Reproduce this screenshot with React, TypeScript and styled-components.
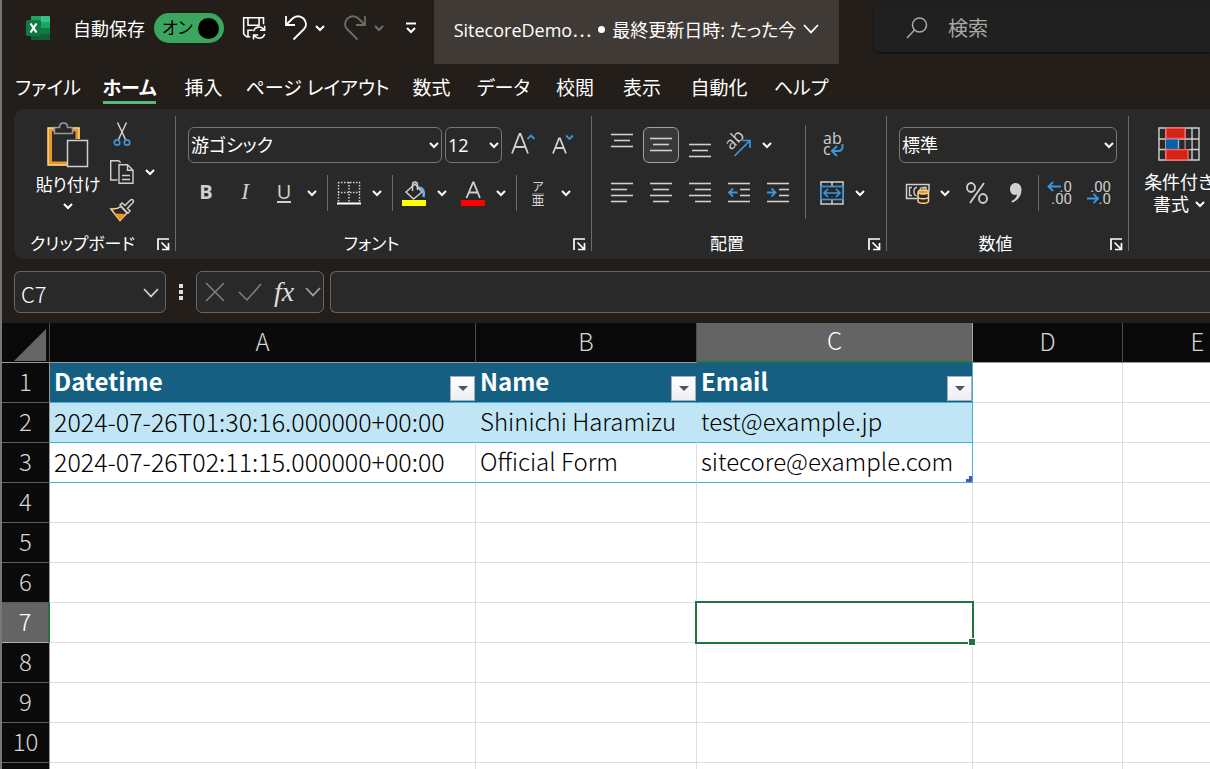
import React, { useState } from "react";
import styled, { createGlobalStyle, css } from "styled-components";

const UI_FONT = '"Open Sans", "Noto Sans CJK JP", sans-serif';
const SHEET_FONT = '"Noto Sans CJK JP", sans-serif';

const ink = "#ffffff";
const icon = "#d0d0d0";
const blue = "#3a96dd";
const panel = "#292929";
const line = "#6b6b6b";
const green = "#217346";
const gold = "#e8962a";
const paleGold = "#fbd68a";

const GlobalStyle = createGlobalStyle`
  * { box-sizing: border-box; }
  body { margin: 0; background: #231e19; }
  button, input, select { font: inherit; color: inherit; }
  svg { flex: none; overflow: visible; }
`;

const Window = styled.div`
  display: flex;
  flex-direction: column;
  height: 100vh;
  overflow: hidden;
  border-left: 2px solid #777777;
  background: #231e19;
  color: ${ink};
  font-family: ${UI_FONT};
  font-size: 18px;
  font-feature-settings: "palt";
`;

/* ---------- title bar ---------- */

const TitleBar = styled.header`
  display: flex;
  align-items: flex-start;
  height: 64px;
  flex: none;
`;

const QuickAccess = styled.div`
  display: flex;
  align-items: center;
  gap: 18px;
  height: 56px;
  width: 432px;
  flex: none;
  padding-left: 24px;
`;

const AutoSave = styled.label`
  display: flex;
  align-items: center;
  gap: 9px;
  margin-left: 5px;
  white-space: nowrap;
`;

const HiddenCheck = styled.input`
  position: absolute;
  opacity: 0;
  width: 1px;
  height: 1px;
`;

const Toggle = styled.span<{ $on: boolean }>`
  display: flex;
  flex-direction: ${(p) => (p.$on ? "row" : "row-reverse")};
  align-items: center;
  justify-content: space-between;
  width: 70px;
  height: 30px;
  padding: 0 5px 0 8px;
  border-radius: 15px;
  background: ${(p) => (p.$on ? "#3aa660" : "#666666")};
  color: #000000;
  font-size: 17px;
  line-height: 30px;
`;

const Knob = styled.span`
  width: 21px;
  height: 21px;
  border-radius: 50%;
  background: #000000;
`;

const IconButton = styled.button<{ $w?: number; $dim?: boolean }>`
  display: flex;
  align-items: center;
  justify-content: center;
  width: ${(p) => p.$w ?? 24}px;
  height: 36px;
  flex: none;
  padding: 0;
  border: 0;
  background: none;
  opacity: ${(p) => (p.$dim ? 0.35 : 1)};
`;

const DocTitle = styled.button`
  display: flex;
  align-items: center;
  justify-content: center;
  gap: 7px;
  width: 405px;
  height: 64px;
  flex: none;
  padding: 0 0 6px;
  border: 0;
  background: #3f3a36;
  white-space: nowrap;
`;

const FileName = styled.span`
  display: block;
`;

const Ellipsis = styled.span`
  font-family: ${SHEET_FONT};
  font-feature-settings: normal;
`;

const Bullet = styled.span`
  width: 7px;
  height: 7px;
  border-radius: 50%;
  background: ${ink};
`;

const Search = styled.label`
  display: flex;
  align-items: center;
  flex: 1;
  min-width: 0;
  height: 48px;
  gap: 20px;
  margin: 4px 0 0 35px;
  padding-left: 32px;
  border-radius: 6px 0 0 6px;
  background: #202020;
  box-shadow: 0 1px 2px #0c0c0c;
  color: #b0b0b0;
`;

const SearchInput = styled.input`
  flex: 1;
  min-width: 0;
  padding: 0;
  border: 0;
  outline: 0;
  background: none;
  font-size: 20px;
  &::placeholder { color: #a8a8a8; opacity: 1; }
`;

/* ---------- tabs ---------- */

const Tabs = styled.nav`
  display: flex;
  gap: 27px;
  height: 45px;
  flex: none;
  padding: 8px 0 0 18px;
`;

const Tab = styled.button<{ $w: number; $active?: boolean }>`
  display: flex;
  justify-content: center;
  width: ${(p) => p.$w}px;
  height: 32px;
  flex: none;
  padding: 0;
  border: 0;
  border-bottom: 3px solid ${(p) => (p.$active ? "#55b97b" : "transparent")};
  background: none;
  font-size: 19px;
  line-height: 32px;
  font-weight: ${(p) => (p.$active ? 700 : 400)};
  white-space: nowrap;
`;

/* ---------- ribbon ---------- */

const Ribbon = styled.section`
  display: flex;
  height: 150px;
  flex: none;
  margin-left: 12px;
  padding: 7px 0 8px;
  border-radius: 10px 0 0 10px;
  background: ${panel};
`;

const Group = styled.div<{ $w: number }>`
  display: flex;
  flex-direction: column;
  justify-content: space-between;
  width: ${(p) => p.$w}px;
  flex: none;
  border-right: 1px solid ${line};
`;

const GroupBody = styled.div<{ $left?: number }>`
  display: flex;
  height: 102px;
  padding: 11px 0 0 ${(p) => p.$left ?? 12}px;
`;

const GroupFooter = styled.div`
  display: grid;
  grid-template-columns: 1fr 24px;
  grid-template-rows: 26px;
  align-items: center;
  margin-bottom: -6px;
  font-size: 17px;
  line-height: 24px;
  text-align: center;
`;

const Rows = styled.div`
  display: flex;
  flex-direction: column;
  gap: 12px;
`;

const Row = styled.div`
  display: flex;
  align-items: center;
  gap: 3px;
  height: 36px;
`;

const Tool = styled.button<{ $active?: boolean }>`
  display: flex;
  align-items: center;
  justify-content: center;
  width: 36px;
  height: 36px;
  flex: none;
  padding: 0;
  border: 1px solid transparent;
  border-radius: 6px;
  background: none;
  color: ${icon};
  font-size: 20px;
  ${(p) =>
    p.$active &&
    css`
      border-color: #a0a0a0;
      background: #383838;
    `}
`;

const Split = styled.div<{ $gap?: number }>`
  display: flex;
  align-items: center;
  gap: ${(p) => p.$gap ?? 0}px;
  flex: none;
`;

const letter = css`
  display: block;
  padding-bottom: 3px;
`;

const Bold = styled.b`
  ${letter}
  font-weight: 700;
`;

const Italic = styled.i`
  ${letter}
  font-family: "Liberation Serif", serif;
  font-size: 23px;
`;

const Underline = styled.span`
  display: block;
  border-bottom: 2px solid ${icon};
  line-height: 18px;
`;

const Divider = styled.span`
  width: 1px;
  height: 36px;
  flex: none;
  margin-left: 2px;
  background: ${line};
`;

const TallDivider = styled.span`
  width: 1px;
  height: 94px;
  flex: none;
  margin: -2px 8px 0 9px;
  background: ${line};
`;

const SelectBox = styled.span<{ $w: number }>`
  position: relative;
  display: block;
  width: ${(p) => p.$w}px;
  height: 36px;
  flex: none;
`;

const Select = styled.select`
  appearance: none;
  width: 100%;
  height: 100%;
  padding: 0 20px 0 2px;
  border: 1px solid #757575;
  border-radius: 6px;
  background: ${panel};
  font-size: 18px;
`;

const SelectArrow = styled.span`
  position: absolute;
  top: 0;
  right: 3px;
  display: flex;
  align-items: center;
  height: 100%;
  pointer-events: none;
`;

const BigTool = styled.button`
  display: flex;
  flex-direction: column;
  align-items: center;
  width: 72px;
  flex: none;
  padding: 0;
  border: 0;
  background: none;
  font-size: 17px;
  line-height: 24px;
  white-space: nowrap;
`;

const PasteTool = styled(BigTool)`
  margin-top: -5px;
  gap: 5px;
`;

const FormatTool = styled(BigTool)`
  gap: 10px;
  font-size: 18px;
  line-height: 22px;
`;

const LabelLine = styled.span`
  display: flex;
  align-items: center;
  justify-content: center;
  gap: 6px;
`;

const SmallStack = styled.div`
  display: flex;
  flex-direction: column;
  gap: 2px;
  margin-top: -11px;
`;

/* ---------- formula bar ---------- */

const FormulaBar = styled.div`
  display: flex;
  align-items: center;
  flex: none;
  height: 64px;
  padding: 2px 0 0 12px;
`;

const fieldBox = css`
  display: flex;
  align-items: center;
  height: 42px;
  border: 1px solid #666666;
  border-radius: 6px;
  background: ${panel};
`;

const NameBox = styled.label`
  ${fieldBox}
  width: 152px;
  flex: none;
  padding: 2px 6px 0 6px;
`;

const NameInput = styled.input`
  flex: 1;
  min-width: 0;
  padding: 0;
  border: 0;
  outline: 0;
  background: none;
  font-family: ${SHEET_FONT};
  font-size: 22px;
  font-weight: 300;
`;

const FormulaTools = styled.div`
  ${fieldBox}
  width: 128px;
  flex: none;
  justify-content: space-between;
  padding: 0 2px 0 5px;
`;

const Fx = styled.i`
  color: #dddddd;
  font-family: "Liberation Serif", serif;
  font-size: 28px;
  line-height: 36px;
`;

const FormulaInput = styled.input`
  ${fieldBox}
  flex: 1;
  min-width: 0;
  margin-left: 6px;
  padding: 0 8px;
  border-right: 0;
  border-radius: 6px 0 0 6px;
  outline: 0;
`;

/* ---------- sheet ---------- */

const SheetArea = styled.main`
  flex: 1;
  min-height: 0;
  overflow: hidden;
  background: #ffffff;
`;

const Sheet = styled.table`
  width: 1271px;
  table-layout: fixed;
  border-collapse: separate;
  border-spacing: 0;
  font-family: ${SHEET_FONT};
  font-feature-settings: normal;
  font-size: 24px;
  font-weight: 300;
  line-height: 34px;
`;

const Col = styled.col<{ $w: number }>`
  width: ${(p) => p.$w}px;
`;

const headerCell = css<{ $current?: boolean }>`
  height: 40px;
  padding: 0 0 4px;
  background: ${(p) => (p.$current ? "#646464" : "#0a0a0a")};
  color: ${(p) => (p.$current ? "#ffffff" : "#d6d6d6")};
  font-weight: 300;
  text-align: center;
`;

const ColumnHead = styled.th<{ $current?: boolean }>`
  ${headerCell}
  border-right: 1px solid ${(p) => (p.$current ? "#a6a6a6" : "#4c4c4c")};
  border-bottom: ${(p) => (p.$current ? `2px solid ${green}` : "1px solid #9a9a9a")};
`;

const RowHead = styled.th<{ $current?: boolean }>`
  ${headerCell}
  border-right: ${(p) => (p.$current ? `2px solid ${green}` : "1px solid #9a9a9a")};
  border-bottom: 1px solid ${(p) => (p.$current ? "#b0b0b0" : "#5c5c5c")};
`;

const Corner = styled.td`
  height: 40px;
  padding: 4px 3px 0 0;
  background: #0a0a0a;
  border-right: 1px solid #4c4c4c;
  border-bottom: 1px solid #9a9a9a;
  line-height: 0;
  text-align: right;
`;

type Kind = "plain" | "title" | "band" | "data";

const Cell = styled.td<{ $kind: Kind; $last?: boolean; $numeric?: boolean }>`
  position: relative;
  height: 40px;
  padding: 0 0 4px 4px;
  border-right: 1px solid #dedede;
  border-bottom: 1px solid #dedede;
  color: #000000;
  font-size: ${(p) => (p.$numeric ? 25 : 24)}px;
  white-space: nowrap;
  ${(p) =>
    p.$kind !== "plain" &&
    css`
      border-bottom-color: #44b3e1;
    `}
  ${(p) =>
    p.$kind === "title" &&
    css`
      padding-bottom: 0;
      background: #156082;
      border-right-color: #156082;
      color: #ffffff;
      font-weight: 700;
    `}
  ${(p) =>
    p.$kind === "band" &&
    css`
      background: #c0e6f5;
      border-right-color: #c0e6f5;
    `}
  ${(p) =>
    p.$last &&
    css`
      border-right-color: #44b3e1;
    `}
`;

const TitleContent = styled.div`
  display: flex;
  justify-content: space-between;
  height: 39px;
  line-height: 35px;
`;

const FilterButton = styled.button`
  display: flex;
  align-items: center;
  align-self: flex-end;
  justify-content: center;
  width: 25px;
  height: 25px;
  margin-bottom: 1px;
  padding: 0;
  border: 1px solid #a9acb4;
  background: linear-gradient(#ffffff, #eceef3);
`;

const Selection = styled.span`
  position: absolute;
  inset: -2px;
  z-index: 1;
  border: 2px solid ${green};
`;

const FillHandle = styled.span`
  position: absolute;
  right: -4px;
  bottom: -4px;
  width: 8px;
  height: 8px;
  border: 1px solid #ffffff;
  background: ${green};
`;

const TableCorner = styled.svg`
  position: absolute;
  right: 0;
  bottom: 0;
`;

/* ---------- icons ---------- */

const SmallChevron = ({ color = ink }: { color?: string }) => (
  <svg width="10" height="8" viewBox="0 0 10 8" fill="none" stroke={color} strokeWidth="2">
    <path d="M1 2l4 4 4-4" />
  </svg>
);

const WideChevron = ({ color = icon }: { color?: string }) => (
  <svg width="16" height="10" viewBox="0 0 16 10" fill="none" stroke={color} strokeWidth="1.7">
    <path d="M1 1l7 7.4L15 1" />
  </svg>
);

const ExcelLogo = () => (
  <svg width="24" height="24" viewBox="0 0 24 24">
    <path d="M5 0h10v6H5z" fill="#21a366" />
    <path d="M15 0h8a1 1 0 0 1 1 1v5h-9z" fill="#33c481" />
    <path d="M5 6h10v6H5z" fill="#107c41" />
    <path d="M15 6h9v6h-9z" fill="#21a366" />
    <path d="M5 12h10v6H5z" fill="#185c37" />
    <path d="M15 12h9v6h-9z" fill="#107c41" />
    <path d="M5 18h19v5a1 1 0 0 1-1 1H6a1 1 0 0 1-1-1z" fill="#185c37" />
    <rect x="0" y="4" width="15" height="16" rx="1.5" fill="#10793f" />
    <path d="M4.500 7.500l6 9M10.500 7.500l-6 9" stroke="#fff" strokeWidth="2.200" />
  </svg>
);

const SaveIcon = () => (
  <svg width="24" height="24" viewBox="0 0 26 26" fill="none" stroke={ink} strokeWidth="1.700">
    <path d="M9 22.500H5L1.800 19.500V1.800h21.500V9" />
    <path d="M6.500 2v8h12V2" />
    <path d="M6.500 23v-7.500h5" />
    <path d="M12.500 16.500a6 6 0 0 1 11-1.500M24.500 10.500v5h-5" />
    <path d="M24.500 19.500a6 6 0 0 1-11 1.500M12.500 25.500v-5h5" />
  </svg>
);

const UndoIcon = () => (
  <svg width="24" height="26" viewBox="0 0 24 26" fill="none" stroke={ink} strokeWidth="1.800">
    <path d="M2 1v9h9" />
    <path d="M2.500 9.500l6-6c3-3 8-3 11 0s3.500 7.500.5 10.500L9.500 24.500" />
  </svg>
);

const RedoIcon = () => (
  <svg width="24" height="26" viewBox="0 0 24 26" fill="none" stroke={ink} strokeWidth="1.800">
    <path d="M22 1v9h-9" />
    <path d="M21.500 9.500l-6-6c-3-3-8-3-11 0S1 11 4 14l10.500 10.500" />
  </svg>
);

const CustomiseIcon = () => (
  <svg width="12" height="12" viewBox="0 0 12 12" fill="none" stroke={ink} strokeWidth="2">
    <path d="M1 1.500h10M2 6l4 4 4-4" />
  </svg>
);

const SearchIcon = () => (
  <svg width="22" height="22" viewBox="0 0 22 22" fill="none" stroke="#a8a8a8" strokeWidth="1.500">
    <circle cx="13.500" cy="8" r="7" />
    <path d="M8.500 13L1 21" />
  </svg>
);

const PasteIcon = () => (
  <svg width="42" height="46" viewBox="0 0 42 46" fill="none">
    <path d="M7 7.500H3v34h17M26 7.500h4.500V17" stroke={gold} strokeWidth="4" />
    <path d="M7 6H1v37h19M26 6h6v11" stroke={paleGold} strokeWidth="1.500" />
    <path d="M7.500 11.500v-6h5c0-6 8-6 8 0h5v6z" fill={panel} stroke="#9a9a9a" strokeWidth="1.500" />
    <rect x="20.500" y="18.500" width="20" height="26" fill={panel} stroke={icon} strokeWidth="1.500" />
  </svg>
);

const CutIcon = () => (
  <svg width="18" height="26" viewBox="0 0 18 26" fill="none">
    <path d="M4.500 1.500l8 17M13.500 1.500l-8 17" stroke={icon} strokeWidth="1.500" />
    <circle cx="4" cy="21.500" r="2.700" stroke={blue} strokeWidth="1.700" />
    <circle cx="14" cy="21.500" r="2.700" stroke={blue} strokeWidth="1.700" />
  </svg>
);

const CopyIcon = () => (
  <svg width="26" height="26" viewBox="0 0 26 26" fill="none" stroke={icon} strokeWidth="1.400">
    <path d="M8.500 21H1.700V1.700h8l2 2" />
    <path d="M10 5.700h8.500l5.500 5.500v13H10zM18.500 5.700v5.500H24" />
    <path d="M13 16.500h8M13 20.500h8" />
  </svg>
);

const BrushIcon = () => (
  <svg width="26" height="24" viewBox="0 0 26 24" fill="none">
    <path d="M2 11l9 11.500L18 15l-6-6.500c-2.500 2-6 2.800-10 2.500z" fill={panel} stroke={paleGold} strokeWidth="1.500" />
    <path d="M5.500 15.500L17 16l-6 6.500z" fill={gold} />
    <path d="M11 7l2-2 3 2.500L21.500 2c1.800-1.500 4 .8 2.500 2.500l-5.500 5.700 2.500 2.800-2 2.200z" fill={panel} stroke={icon} strokeWidth="1.500" />
  </svg>
);

const LauncherIcon = () => (
  <svg width="13" height="13" viewBox="0 0 13 13" fill="none" stroke={ink} strokeWidth="1.700">
    <path d="M1 12V1h11M4.500 4.500l6.500 6.500M11.500 5v6.500H5" />
  </svg>
);

const FontSizeIcon = ({ up }: { up?: boolean }) => (
  <svg width="26" height="26" viewBox="0 0 26 26" fill="none">
    <path d={up ? "M2 21.500L9.500 2h1L18 21.500M5 15h10" : "M4 21.500l6-15h1l6 15M6.500 16h8"} stroke={icon} strokeWidth="1.800" />
    <path d={up ? "M17.500 7L21 3.500 24.500 7" : "M17 3.500L20.500 7 24 3.500"} stroke={blue} strokeWidth="1.800" />
  </svg>
);

const BordersIcon = () => (
  <svg width="24" height="24" viewBox="0 0 24 24" fill="none" stroke={icon} strokeWidth="1.500">
    <path d="M1 1.500h22M1.500 1v20M22.500 1v20M12 1v20M1 11.500h22" strokeDasharray="1.500 1.500" />
    <path d="M0 22.500h24" stroke={ink} strokeWidth="2" />
  </svg>
);

const FillIcon = () => (
  <svg width="24" height="25" viewBox="0 0 24 25" fill="none">
    <path d="M4 11l9-8 7 8-8.500 7z" stroke={icon} strokeWidth="1.500" />
    <path d="M10.500 10V4c0-4 5-4 5 0v5" stroke={icon} strokeWidth="1.500" />
    <path d="M17 6.500c4 .5 5.500 3 4.500 9.500" stroke="#6bb0e8" strokeWidth="2.500" />
    <path d="M0 19h24v6H0z" fill="#ffff00" />
  </svg>
);

const FontColorIcon = () => (
  <svg width="24" height="25" viewBox="0 0 24 25" fill="none">
    <path d="M5.500 17L12 1.500h.6L19 17M8 11.500h9" stroke={icon} strokeWidth="1.800" />
    <path d="M0 19h24v6H0z" fill="#ff0000" />
  </svg>
);

const PhoneticIcon = () => (
  <svg width="16" height="26" viewBox="0 0 16 26" fill={icon}>
    <text x="8" y="11" fontSize="12" textAnchor="middle">ア</text>
    <path d="M2 14h12" stroke={icon} strokeWidth="0.600" />
    <text x="8" y="25" fontSize="13" textAnchor="middle">亜</text>
  </svg>
);

const lineSets: Record<string, number[][]> = {
  top: [[1, 23, 3], [4, 20, 9], [1, 23, 15]],
  middle: [[1, 23, 7], [4, 20, 13], [1, 23, 19]],
  bottom: [[1, 23, 13], [4, 20, 19], [1, 23, 25]],
  left: [[1, 23, 4], [1, 17, 10], [1, 23, 16], [1, 17, 22]],
  center: [[1, 23, 4], [4, 20, 10], [1, 23, 16], [4, 20, 22]],
  right: [[1, 23, 4], [7, 23, 10], [1, 23, 16], [7, 23, 22]],
  indent: [[1, 23, 4], [13, 23, 10], [13, 23, 16], [1, 23, 22]],
};

const LinesIcon = ({ kind, arrow }: { kind: string; arrow?: string }) => (
  <svg width="24" height="26" viewBox="0 0 24 26" fill="none" stroke={icon} strokeWidth="1.600">
    {lineSets[kind].map(([a, b, y]) => (
      <path key={y} d={`M${a} ${y - 0.5}H${b}`} />
    ))}
    {arrow && <path d={arrow} stroke={blue} strokeWidth="1.800" />}
  </svg>
);

const OrientationIcon = () => (
  <svg width="26" height="26" viewBox="0 0 26 26" fill="none">
    <text x="5" y="18" fontSize="17" fill={icon} transform="rotate(-45 6 18)">ab</text>
    <path d="M8.500 24L23.500 9M16.500 8.500H24V16" stroke={blue} strokeWidth="1.700" />
  </svg>
);

const WrapIcon = () => (
  <svg width="24" height="28" viewBox="0 0 24 28" fill="none">
    <text x="3" y="13" fontSize="16" fill={icon}>ab</text>
    <text x="3" y="24" fontSize="16" fill={icon}>c</text>
    <path d="M22.500 13v2.500c0 3-1.500 4.500-4.500 4.500h-5M17 15l-5 5 5 5" stroke={blue} strokeWidth="2" />
  </svg>
);

const MergeIcon = () => (
  <svg width="24" height="24" viewBox="0 0 24 24" fill="none">
    <path d="M1 1h22v22H1zM12 1v22" stroke={icon} strokeWidth="1.500" />
    <rect x="1" y="5.500" width="22" height="13" fill={panel} stroke={blue} strokeWidth="1.700" />
    <path d="M4 12h16M8 8l-4 4 4 4M16 8l4 4-4 4" stroke={blue} strokeWidth="1.700" />
  </svg>
);

const CurrencyIcon = () => (
  <svg width="25" height="22" viewBox="0 0 25 22" fill="none">
    <path d="M12 16.500H1.500v-14H24v7" stroke={icon} strokeWidth="1.500" />
    <path d="M7 5.500H4.500v8H7M12 5.500c-4-1-4 9-.5 8M15 8c0-3 3-3 4-1M18 5.500h3v3" stroke={icon} strokeWidth="1.400" />
    <path d="M13 10.500v8.500c0 3 10.500 3 10.500 0v-8.500" fill={panel} stroke={paleGold} strokeWidth="1.500" />
    <ellipse cx="18.250" cy="10" rx="5.250" ry="2" fill={gold} stroke={paleGold} strokeWidth="1.300" />
    <path d="M13 14.500c0 3 10.500 3 10.500 0" stroke={paleGold} strokeWidth="1.300" />
  </svg>
);

const PercentIcon = () => (
  <svg width="24" height="24" viewBox="0 0 24 24" fill="none" stroke={icon} strokeWidth="1.800">
    <ellipse cx="7" cy="6.500" rx="4" ry="4.500" />
    <ellipse cx="19" cy="17.500" rx="4" ry="4.500" />
    <path d="M20 2L6 22" />
  </svg>
);

const CommaIcon = () => (
  <svg width="14" height="20" viewBox="0 0 14 20" fill={icon}>
    <path d="M7.500 0C11 0 13.500 2.500 13.500 7c0 6-3.500 10.500-9.500 12.500L3.500 18c3.500-1.500 5-3.500 5.500-6.500C5 13 2 10 2 6c0-3.500 2.500-6 5.500-6z" />
  </svg>
);

const DecimalIcon = ({ more }: { more?: boolean }) => (
  <svg width="26" height="28" viewBox="0 0 26 28" fill={icon} fontFamily="Roboto, sans-serif" fontSize="15">
    <text x="25" y="13" textAnchor="end">{more ? ".0" : ".00"}</text>
    <text x="25" y="25" textAnchor="end">{more ? ".00" : ".0"}</text>
    <path
      d={more ? "M14 7.500H1M6 3L1.500 7.500 6 12" : "M1 19.500h12M7.500 15l4.500 4.500-4.500 4.500"}
      fill="none"
      stroke={blue}
      strokeWidth="1.800"
    />
  </svg>
);

const ConditionalIcon = () => (
  <svg width="42" height="34" viewBox="0 0 42 34" fill="none">
    <path d="M1 1h40v32H1zM1 12h40M1 22.500h40M8 1v32M27 1v32M34 1v32" stroke={icon} strokeWidth="1.400" />
    <path d="M8 1h19v10.500H8zM8 22.500h22V33H8z" fill="#d42314" stroke="#f4656b" strokeWidth="1.400" />
    <path d="M21 13h5.500v9H21zM27.700 13h5.500v9h-5.500z" fill={panel} />
    <path d="M8 12.500h12.500v9H8z" fill="#0063b1" />
    <path d="M20.500 12.500v9" stroke="#83beec" strokeWidth="1.400" />
  </svg>
);

const DotsIcon = () => (
  <svg width="4" height="18" viewBox="0 0 4 18" fill="#dddddd">
    <path d="M0 1h4v4H0zM0 7h4v4H0zM0 13h4v4H0z" />
  </svg>
);

const CancelIcon = () => (
  <svg width="20" height="20" viewBox="0 0 20 20" stroke="#808080" strokeWidth="1.500">
    <path d="M1 1l18 18M19 1L1 19" />
  </svg>
);

const AcceptIcon = () => (
  <svg width="24" height="18" viewBox="0 0 24 18" fill="none" stroke="#808080" strokeWidth="1.500">
    <path d="M1 9l8 8L23 1" />
  </svg>
);

/* ---------- parts ---------- */

const SplitTool = ({ label, children }: { label: string; children: React.ReactNode }) => (
  <Split>
    <Tool aria-label={label}>{children}</Tool>
    <IconButton $w={20} aria-label={`${label} オプション`}>
      <SmallChevron />
    </IconButton>
  </Split>
);

const Dropdown = ({ label, value, width }: { label: string; value: string; width: number }) => (
  <SelectBox $w={width}>
    <Select aria-label={label} defaultValue={value}>
      <option>{value}</option>
    </Select>
    <SelectArrow>
      <SmallChevron />
    </SelectArrow>
  </SelectBox>
);

const Footer = ({ children }: { children: string }) => (
  <GroupFooter>
    <span>{children}</span>
    <IconButton aria-label={`${children} の設定`}>
      <LauncherIcon />
    </IconButton>
  </GroupFooter>
);

const tabs: [string, number][] = [
  ["ファイル", 56],
  ["ホーム", 53],
  ["挿入", 41],
  ["ページ レイアウト", 133],
  ["数式", 41],
  ["データ", 49],
  ["校閲", 40],
  ["表示", 40],
  ["自動化", 60],
  ["ヘルプ", 50],
];

const columns: [string, number][] = [
  ["A", 426],
  ["B", 221],
  ["C", 276],
  ["D", 150],
  ["E", 150],
];

const records: string[][] = [
  ["Datetime", "Name", "Email"],
  ["2024-07-26T01:30:16.000000+00:00", "Shinichi Haramizu", "test@example.jp"],
  ["2024-07-26T02:11:15.000000+00:00", "Official Form", "sitecore@example.com"],
];

const kinds: Kind[] = ["title", "band", "data"];
const rowNumbers = Array.from({ length: 11 }, (_, i) => i + 1);

export default function App() {
  const [autoSave, setAutoSave] = useState(true);
  const [tab, setTab] = useState("ホーム");

  return (
    <Window>
      <GlobalStyle />
      <TitleBar>
        <QuickAccess>
          <ExcelLogo />
          <AutoSave>
            自動保存
            <HiddenCheck type="checkbox" checked={autoSave} onChange={() => setAutoSave(!autoSave)} />
            <Toggle $on={autoSave}>
              {autoSave ? "オン" : "オフ"}
              <Knob />
            </Toggle>
          </AutoSave>
          <IconButton aria-label="保存"><SaveIcon /></IconButton>
          <Split $gap={7}>
            <IconButton aria-label="元に戻す"><UndoIcon /></IconButton>
            <IconButton $w={10} aria-label="元に戻す オプション"><SmallChevron /></IconButton>
          </Split>
          <Split $gap={7}>
            <IconButton $dim aria-label="やり直し"><RedoIcon /></IconButton>
            <IconButton $w={10} $dim aria-label="やり直し オプション"><SmallChevron /></IconButton>
          </Split>
          <IconButton $w={18} aria-label="クイック アクセスのカスタマイズ"><CustomiseIcon /></IconButton>
        </QuickAccess>
        <DocTitle>
          <FileName>SitecoreDemo<Ellipsis>…</Ellipsis></FileName>
          <Bullet />
          <span>最終更新日時: たった今</span>
          <WideChevron color={ink} />
        </DocTitle>
        <Search>
          <SearchIcon />
          <SearchInput type="search" placeholder="検索" aria-label="検索" />
        </Search>
      </TitleBar>

      <Tabs>
        {tabs.map(([name, width]) => (
          <Tab key={name} $w={width} $active={name === tab} onClick={() => setTab(name)}>
            {name}
          </Tab>
        ))}
      </Tabs>

      <Ribbon>
        <Group $w={162}>
          <GroupBody $left={18}>
            <PasteTool>
              <PasteIcon />
              貼り付け
              <SmallChevron />
            </PasteTool>
            <SmallStack>
              <Tool aria-label="切り取り"><CutIcon /></Tool>
              <SplitTool label="コピー"><CopyIcon /></SplitTool>
              <Tool aria-label="書式のコピー"><BrushIcon /></Tool>
            </SmallStack>
          </GroupBody>
          <Footer>クリップボード</Footer>
        </Group>

        <Group $w={416}>
          <GroupBody>
            <Rows>
              <Row>
                <Dropdown label="フォント" value="游ゴシック" width={254} />
                <Dropdown label="フォント サイズ" value="12" width={57} />
                <Tool aria-label="フォント サイズの拡大"><FontSizeIcon up /></Tool>
                <Tool aria-label="フォント サイズの縮小"><FontSizeIcon /></Tool>
              </Row>
              <Row>
                <Tool aria-label="太字"><Bold>B</Bold></Tool>
                <Tool aria-label="斜体"><Italic>I</Italic></Tool>
                <SplitTool label="下線"><Underline>U</Underline></SplitTool>
                <Divider />
                <SplitTool label="罫線"><BordersIcon /></SplitTool>
                <Divider />
                <SplitTool label="塗りつぶしの色"><FillIcon /></SplitTool>
                <SplitTool label="フォントの色"><FontColorIcon /></SplitTool>
                <Divider />
                <SplitTool label="ふりがな"><PhoneticIcon /></SplitTool>
              </Row>
            </Rows>
          </GroupBody>
          <Footer>フォント</Footer>
        </Group>

        <Group $w={295}>
          <GroupBody>
            <Rows>
              <Row>
                <Tool aria-label="上揃え"><LinesIcon kind="top" /></Tool>
                <Tool $active aria-label="上下中央揃え"><LinesIcon kind="middle" /></Tool>
                <Tool aria-label="下揃え"><LinesIcon kind="bottom" /></Tool>
                <SplitTool label="方向"><OrientationIcon /></SplitTool>
              </Row>
              <Row>
                <Tool aria-label="左揃え"><LinesIcon kind="left" /></Tool>
                <Tool aria-label="中央揃え"><LinesIcon kind="center" /></Tool>
                <Tool aria-label="右揃え"><LinesIcon kind="right" /></Tool>
                <Tool aria-label="インデントを減らす">
                  <LinesIcon kind="indent" arrow="M10.500 12.500H2M6 8.500l-4 4 4 4" />
                </Tool>
                <Tool aria-label="インデントを増やす">
                  <LinesIcon kind="indent" arrow="M1 12.500h8.500M5.500 8.500l4 4-4 4" />
                </Tool>
              </Row>
            </Rows>
            <TallDivider />
            <Rows>
              <Row>
                <Tool aria-label="折り返して全体を表示する"><WrapIcon /></Tool>
              </Row>
              <Row>
                <SplitTool label="セルを結合して中央揃え"><MergeIcon /></SplitTool>
              </Row>
            </Rows>
          </GroupBody>
          <Footer>配置</Footer>
        </Group>

        <Group $w={242}>
          <GroupBody>
            <Rows>
              <Row>
                <Dropdown label="表示形式" value="標準" width={218} />
              </Row>
              <Row>
                <SplitTool label="通貨表示形式"><CurrencyIcon /></SplitTool>
                <Tool aria-label="パーセント スタイル"><PercentIcon /></Tool>
                <Tool aria-label="桁区切りスタイル"><CommaIcon /></Tool>
                <Divider />
                <Tool aria-label="小数点以下の表示桁数を増やす"><DecimalIcon more /></Tool>
                <Tool aria-label="小数点以下の表示桁数を減らす"><DecimalIcon /></Tool>
              </Row>
            </Rows>
          </GroupBody>
          <Footer>数値</Footer>
        </Group>

        <GroupBody $left={14}>
          <FormatTool>
            <ConditionalIcon />
            <span>
              条件付き
              <LabelLine>
                書式 <SmallChevron />
              </LabelLine>
            </span>
          </FormatTool>
        </GroupBody>
      </Ribbon>

      <FormulaBar>
        <NameBox>
          <NameInput aria-label="名前ボックス" defaultValue="C7" />
          <WideChevron />
        </NameBox>
        <IconButton $w={30} aria-label="サイズ変更"><DotsIcon /></IconButton>
        <FormulaTools>
          <IconButton $w={26} aria-label="キャンセル"><CancelIcon /></IconButton>
          <IconButton $w={26} aria-label="入力"><AcceptIcon /></IconButton>
          <IconButton aria-label="関数の挿入"><Fx>fx</Fx></IconButton>
          <IconButton $w={16} aria-label="関数の一覧"><WideChevron color="#a0a0a0" /></IconButton>
        </FormulaTools>
        <FormulaInput aria-label="数式バー" />
      </FormulaBar>

      <SheetArea>
        <Sheet>
          <colgroup>
            <Col $w={48} />
            {columns.map(([name, width]) => (
              <Col key={name} $w={width} />
            ))}
          </colgroup>
          <thead>
            <tr>
              <Corner>
                <svg width="32" height="32" viewBox="0 0 32 32">
                  <path d="M32 0v32H0z" fill="#666666" />
                </svg>
              </Corner>
              {columns.map(([name]) => (
                <ColumnHead key={name} scope="col" $current={name === "C"}>
                  {name}
                </ColumnHead>
              ))}
            </tr>
          </thead>
          <tbody>
            {rowNumbers.map((n) => (
              <tr key={n}>
                <RowHead scope="row" $current={n === 7}>
                  {n}
                </RowHead>
                {columns.map(([name], c) => {
                  const text = records[n - 1]?.[c];
                  const kind: Kind = text ? kinds[n - 1] : "plain";
                  return (
                    <Cell
                      key={name}
                      $kind={kind}
                      $last={!!text && c === 2}
                      $numeric={c === 0 && kind !== "title"}
                    >
                      {kind === "title" ? (
                        <TitleContent>
                          {text}
                          <FilterButton aria-label={`${text} フィルター`}>
                            <svg width="10" height="6" viewBox="0 0 10 6">
                              <path d="M0 0h10L5 5z" fill="#555555" />
                            </svg>
                          </FilterButton>
                        </TitleContent>
                      ) : (
                        text
                      )}
                      {n === 3 && c === 2 && (
                        <TableCorner width="6" height="6" viewBox="0 0 6 6">
                          <path d="M3 0h3v6H0V3h3z" fill="#4658b4" />
                        </TableCorner>
                      )}
                      {n === 7 && c === 2 && (
                        <Selection>
                          <FillHandle />
                        </Selection>
                      )}
                    </Cell>
                  );
                })}
              </tr>
            ))}
          </tbody>
        </Sheet>
      </SheetArea>
    </Window>
  );
}
